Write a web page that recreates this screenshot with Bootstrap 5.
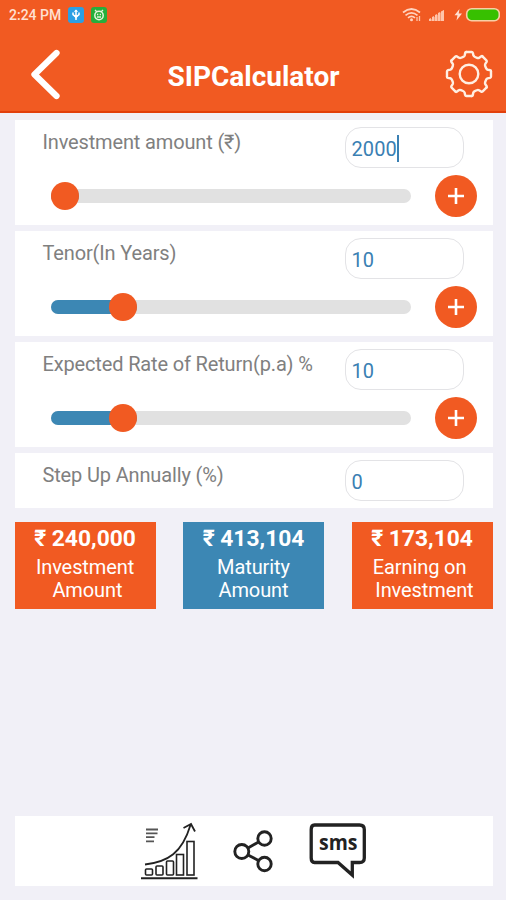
<!DOCTYPE html>
<html lang="en">
<head>
<meta charset="utf-8">
<meta name="viewport" content="width=device-width, initial-scale=1">
<title>SIPCalculator</title>
<link rel="stylesheet" href="https://cdn.jsdelivr.net/npm/bootstrap@5.3.0/dist/css/bootstrap.min.css">
<style>
  :root { --orange: #f15a22; --blue: #3c87b4; }
  body { width: 506px; height: 900px; background: #f1f0f7; font-family: Roboto, "Noto Sans", sans-serif; line-height: 1.2; overflow: hidden; }
  svg { display: block; flex: none; }
  .app-header { height: 113px; background: var(--orange); border-bottom: 2px solid #e2400c; }
  .status { height: 30px; padding: 0 6px 0 9px; color: #ffe0d2; font-size: 14px; font-weight: 500; }
  .status-icons { gap: 7px; }
  .title-bar { height: 88px; padding: 0 12px 0 29px; }
  .title-text { font-size: 28px; font-weight: 700; padding-top: 5px; }
  .page-body { padding: 7px 13.5px 14px 14.5px; }
  .panel-stack { gap: 6px; }
  .panel { background: #fff; padding: 7px 15.5px 0 28px; height: 105px; }
  .panel-short { height: 55px; }
  .field-label { font-size: 20px; color: #808080; padding-top: 3px; letter-spacing: -.15px; white-space: nowrap; }
  .field-box { width: 119.5px; height: 41px; border: 1.5px solid #e3e3e6; border-radius: 16px; padding: 2px 6px 0; margin-right: 13px; font-size: 20px; color: #3a80b3; letter-spacing: .1px; background: #fff; }
  .caret { width: 2px; height: 27px; background: #3a80b3; }
  .slider-row { margin-top: 7px; height: 42px; padding-left: 8.5px; }
  .track { width: 360px; height: 14px; border-radius: 7px; background: #e1e1e1; }
  .track-fill { height: 14px; border-radius: 7px; background: var(--blue); }
  .thumb { width: 28.5px; height: 28.5px; border-radius: 50%; background: var(--orange); flex: none; }
  .plus { width: 42px; height: 42px; background: var(--orange); }
  .results { margin-top: 14px; }
  .result { width: 141px; height: 87px; background: var(--orange); color: #fff; padding-top: 3px; }
  .result-blue { background: var(--blue); }
  .amount { font-size: 22.8px; font-weight: 700; line-height: 28px; }
  .caption-text { font-size: 20px; line-height: 23px; padding-top: 3px; letter-spacing: -.1px; }
  .tools { height: 70px; background: #fff; }
</style>
</head>
<body class="d-flex flex-column">
<header class="app-header">
  <div class="status d-flex align-items-center justify-content-between">
    <div class="status-icons d-flex align-items-center">
      <span class="clock">2:24 PM</span>
      <svg width="16" height="16" viewBox="0 0 16 16"><rect width="16" height="16" rx="3" fill="#2b9fe4"/><path d="M8 3v10M5 5.500v2.200L8 10l3-2.300V5.500" fill="none" stroke="#fff" stroke-width="1.500"/><path d="M5.800 4.800h4.400L8 2.500zM5.500 8h5l-2.500 4z" fill="#fff"/></svg>
      <svg width="16" height="16" viewBox="0 0 16 16"><rect width="16" height="16" rx="3" fill="#27ae3c"/><circle cx="8" cy="8.500" r="4.200" fill="none" stroke="#e4f5dc" stroke-width="1.500"/><path d="M4 3l2 2M12 3l-2 2M6 7.500h1.300M8.700 7.500H10M6 10h4" stroke="#e4f5dc" stroke-width="1.300"/></svg>
    </div>
    <svg width="98" height="18" viewBox="402 6 98 18">
      <g fill="none" stroke="#ffd3bf" stroke-width="1.700"><path d="M403 12.500q8.500-7 17 0M405.500 15.300q6-5 12 0M408 17.800q3.500-3 7 0"/></g>
      <circle cx="411.500" cy="19.700" r="1.500" fill="#ffd3bf"/><path d="M417 17v4M419.500 16v5" stroke="#ffc4aa" stroke-width="1.300"/>
      <path d="M429 21L444 10V21z" fill="#f79a73"/>
      <path d="M429 21v-2l2-1v3zM432 21v-4l2-1v5zM435 21v-6l2-1v7zM438 21v-8l2-1v9zM441 21V11.500l3-1.500v11z" fill="#ffc4aa"/>
      <path d="M459.500 9l-5 6.200h3l-1 5.300 5.500-7h-3.300z" fill="#ffe0d2"/>
      <rect x="466.700" y="8.700" width="32.600" height="12" rx="5" fill="#37c000" stroke="#f8cfa6" stroke-width="1.600"/>
    </svg>
  </div>
  <div class="title-bar d-flex align-items-center justify-content-between text-white">
    <svg width="34" height="54" viewBox="0 0 34 54"><path d="M27.500 6L5.500 27.500 27.500 49" fill="none" stroke="#fff" stroke-width="6.300" stroke-linecap="round" stroke-linejoin="round"/></svg>
    <div class="title-text">SIPCalculator</div>
    <svg width="50" height="50" viewBox="-25 -25 50 50" fill="none" stroke="#ffefe2" stroke-width="2.400" stroke-linecap="round" stroke-linejoin="round">
      <defs><path id="tooth" d="M-2.600-22H2.600Q3.600-22 3.900-21L4.400-18.600Q4.800-17.500 6-17L8-16.200Q9.300-15.700 10.300-16.300L12.300-17.700Q13.100-18.200 13.700-17.400"/></defs>
      <circle r="9.300"/>
      <use href="#tooth"/><use href="#tooth" transform="rotate(45)"/><use href="#tooth" transform="rotate(90)"/><use href="#tooth" transform="rotate(135)"/><use href="#tooth" transform="rotate(180)"/><use href="#tooth" transform="rotate(225)"/><use href="#tooth" transform="rotate(270)"/><use href="#tooth" transform="rotate(315)"/>
    </svg>
  </div>
</header>

<main class="page-body d-flex flex-column flex-grow-1">
  <div class="panel-stack d-flex flex-column">
    <section class="panel">
      <div class="d-flex justify-content-between">
        <div class="field-label">Investment amount (₹)</div>
        <div class="field-box d-flex align-items-center"><span>2000</span><span class="caret"></span></div>
      </div>
      <div class="slider-row d-flex align-items-center justify-content-between">
        <div class="track d-flex align-items-center"><div class="track-fill d-flex align-items-center justify-content-end" style="width:7.9%"><span class="thumb"></span></div></div>
        <div class="plus rounded-circle d-flex align-items-center justify-content-center"><svg width="18" height="18" viewBox="0 0 18 18"><path d="M9 1v16M1 9h16" stroke="#fff" stroke-width="2.600"/></svg></div>
      </div>
    </section>
    <section class="panel">
      <div class="d-flex justify-content-between">
        <div class="field-label">Tenor(In Years)</div>
        <div class="field-box d-flex align-items-center"><span>10</span></div>
      </div>
      <div class="slider-row d-flex align-items-center justify-content-between">
        <div class="track d-flex align-items-center"><div class="track-fill d-flex align-items-center justify-content-end" style="width:24%"><span class="thumb"></span></div></div>
        <div class="plus rounded-circle d-flex align-items-center justify-content-center"><svg width="18" height="18" viewBox="0 0 18 18"><path d="M9 1v16M1 9h16" stroke="#fff" stroke-width="2.600"/></svg></div>
      </div>
    </section>
    <section class="panel">
      <div class="d-flex justify-content-between">
        <div class="field-label">Expected Rate of Return(p.a) %</div>
        <div class="field-box d-flex align-items-center"><span>10</span></div>
      </div>
      <div class="slider-row d-flex align-items-center justify-content-between">
        <div class="track d-flex align-items-center"><div class="track-fill d-flex align-items-center justify-content-end" style="width:24%"><span class="thumb"></span></div></div>
        <div class="plus rounded-circle d-flex align-items-center justify-content-center"><svg width="18" height="18" viewBox="0 0 18 18"><path d="M9 1v16M1 9h16" stroke="#fff" stroke-width="2.600"/></svg></div>
      </div>
    </section>
    <section class="panel panel-short">
      <div class="d-flex justify-content-between">
        <div class="field-label">Step Up Annually (%)</div>
        <div class="field-box d-flex align-items-center"><span>0</span></div>
      </div>
    </section>
  </div>

  <div class="results d-flex justify-content-between text-center">
    <div class="result"><div class="amount">₹ 240,000</div><div class="caption-text">Investment<br>&nbsp;Amount</div></div>
    <div class="result result-blue"><div class="amount">₹ 413,104</div><div class="caption-text">Maturity<br>Amount</div></div>
    <div class="result"><div class="amount">₹ 173,104</div><div class="caption-text">Earning on&nbsp;<br>&nbsp;Investment</div></div>
  </div>

  <nav class="tools mt-auto d-flex align-items-center justify-content-center">
    <svg width="238" height="70" viewBox="135 816 238 70" fill="none" stroke="#222">
      <path d="M141 878.300h56.500" stroke-width="2"/>
      <g stroke-width="1.600"><rect x="145.500" y="869" width="7" height="6" rx="1"/><rect x="156" y="866" width="7" height="9" rx="1"/><rect x="166.500" y="861" width="7" height="14" rx="1"/><rect x="176.500" y="854.500" width="7" height="20.500"/><rect x="187" y="841.500" width="7" height="33.500"/></g>
      <path d="M145 864.500C168 862 182 853 190.500 825M183.500 828l7.500-4 4 7.500" stroke-width="1.800"/>
      <path d="M146 829.500h12M146 833.300h11.500M146 837.200h8.500M146 841.300h8" stroke-width="1.800" stroke="#555"/>
      <g stroke-width="2.900"><circle cx="241.800" cy="851.500" r="7"/><circle cx="264.500" cy="838.500" r="6.700"/><circle cx="264.500" cy="864" r="6.700"/><path d="M248 848l10.500-6M248 855l10.500 5.500"/></g>
      <path d="M314.500 825h45q4.800 0 4.800 4.500v28.500q0 4.500-4.800 4.500h-7.200v12.500L338 862.500h-23.500q-3.300 0-3.300-4.500v-28.500q0-4.500 3.300-4.500z" stroke-width="3.300"/>
      <text x="338.300" y="849.700" text-anchor="middle" font-family="Open Sans, Noto Sans, sans-serif" font-weight="700" font-size="20.500" textLength="38.500" lengthAdjust="spacingAndGlyphs" fill="#222" stroke="none">sms</text>
    </svg>
  </nav>
</main>
<script src="https://cdn.jsdelivr.net/npm/bootstrap@5.3.0/dist/js/bootstrap.bundle.min.js"></script>
</body>
</html>
